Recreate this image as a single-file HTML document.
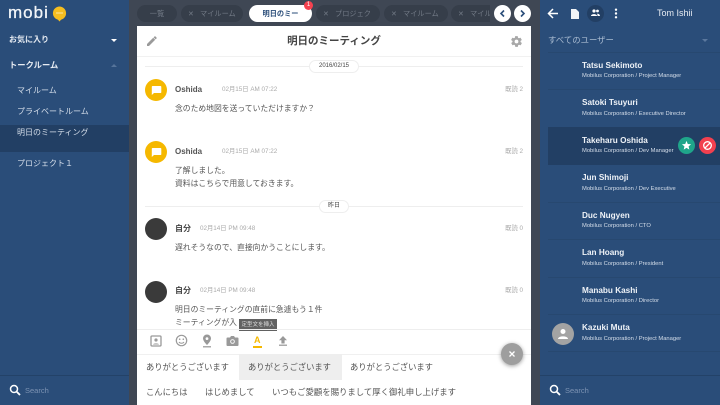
<!DOCTYPE html>
<html lang="ja"><head><meta charset="utf-8">
<style>
*{box-sizing:border-box;margin:0;padding:0}
html,body{width:720px;height:405px;overflow:hidden;background:#3f4754}
body{position:relative;font-family:"Liberation Sans","Noto Sans CJK JP",sans-serif;color:#444}
.a{position:absolute;white-space:nowrap;line-height:1}
.side{position:absolute;top:0;height:405px;background:#2a4d79}
.tab{position:absolute;top:5px;height:17px;border-radius:9px;background:#363e4a;color:#727a86;font-size:7.2px;line-height:17px;overflow:hidden;white-space:nowrap}
.tab i{font-style:normal;display:inline-block;width:12px}
.arrow{position:absolute;top:5px;width:17px;height:17px;border-radius:50%;background:#fff}
.av{position:absolute;left:145px;width:22px;height:22px;border-radius:50%;background:#f5b800}
.av.d{background:#3a3a3a}
.nm{position:absolute;left:175px;font-size:8px;font-weight:bold;color:#555;line-height:1;white-space:nowrap}
.tm{position:absolute;font-size:6.3px;color:#aaa;line-height:1;white-space:nowrap}
.rd{position:absolute;right:197px;font-size:6.3px;color:#aaa;line-height:1;white-space:nowrap}
.msg{position:absolute;left:175px;font-size:7.8px;color:#555;line-height:1;white-space:nowrap}
.un{position:absolute;left:582px;font-size:8.2px;color:#eef2f7;font-weight:bold;line-height:1;white-space:nowrap}
.us{position:absolute;left:582px;font-size:5.8px;color:#d5deea;line-height:1;white-space:nowrap}
.ln{position:absolute;left:548px;width:172px;height:1px;background:#274870}
.ph{position:absolute;font-size:8.3px;color:#555;line-height:1;white-space:nowrap}
.nav{position:absolute;left:17px;font-size:8px;color:#d5deea;line-height:1;white-space:nowrap}
svg{position:absolute;display:block}
</style></head><body>

<!-- left sidebar -->
<div class="side" style="left:0;width:129px"></div>
<div class="a" style="left:8px;top:4px;font-size:17px;color:#f2f5f8;letter-spacing:1px;-webkit-text-stroke:.3px #f2f5f8">mobi</div>
<svg style="left:52px;top:6px" width="15" height="16" viewBox="0 0 15 16"><path d="M7.5 0.500a6.700 6.700 0 0 1 1.500 13.200L7.500 15.500 6 13.700A6.700 6.700 0 0 1 7.500 .5z" fill="#f5bd1f"/><rect x="4" y="6.500" width="7" height="1" fill="#fff" opacity=".6"/></svg>
<div class="a" style="left:9px;top:36px;font-size:8px;font-weight:bold;color:#e6ebf2">お気に入り</div>
<svg style="left:110px;top:38px" width="8" height="5"><path d="M1 1h6L4 4z" fill="#fff"/></svg>
<div class="a" style="left:9px;top:61px;font-size:8.3px;font-weight:bold;color:#e6ebf2">トークルーム</div>
<svg style="left:110px;top:63px" width="8" height="5"><path d="M1 4h6L4 1z" fill="#56749a"/></svg>
<div class="nav" style="top:87px">マイルーム</div>
<div class="nav" style="top:108px">プライベートルーム</div>
<div class="a" style="left:0;top:125px;width:129px;height:27px;background:#223f64"></div>
<div class="nav" style="top:129px">明日のミーティング</div>
<div class="nav" style="top:160px">プロジェクト１</div>
<div class="a" style="left:0;top:375px;width:129px;height:1px;background:#234268"></div>
<svg style="left:9px;top:384px" width="12" height="12" viewBox="0 0 12 12"><circle cx="5" cy="5" r="3.500" fill="none" stroke="#fff" stroke-width="1.500"/><path d="M7.600 7.600L11 11" stroke="#fff" stroke-width="1.800"/></svg>
<div class="a" style="left:25px;top:387px;font-size:7.5px;color:#7d93b3">Search</div>

<!-- tabs -->
<div class="tab" style="left:137px;width:40px;text-align:center">一覧</div>
<div class="tab" style="left:181px;width:62px;padding-left:7px"><i>✕</i>マイルーム</div>
<div class="tab" style="left:249px;width:63px;background:#fff;color:#2a4d79;font-weight:bold;text-align:center">明日のミー</div>
<div class="a" style="left:304px;top:1px;width:9px;height:9px;border-radius:50%;background:#f4414f;color:#fff;font-size:6px;line-height:9px;text-align:center">1</div>
<div class="tab" style="left:316px;width:64px;padding-left:7px"><i>✕</i>プロジェク</div>
<div class="tab" style="left:384px;width:64px;padding-left:7px"><i>✕</i>マイルーム</div>
<div class="tab" style="left:451px;width:39px;border-radius:9px 0 0 9px;padding-left:7px"><i>✕</i>マイルーム</div>
<div class="arrow" style="left:494px"></div>
<svg style="left:494px;top:5px" width="17" height="17"><path d="M10 5.500L7 8.500l3 3" fill="none" stroke="#2a4d79" stroke-width="1.600"/></svg>
<div class="arrow" style="left:514px"></div>
<svg style="left:514px;top:5px" width="17" height="17"><path d="M7 5.500l3 3-3 3" fill="none" stroke="#2a4d79" stroke-width="1.600"/></svg>

<!-- main panel -->
<div class="a" style="left:137px;top:26px;width:394px;height:379px;background:#fff"></div>
<svg style="left:146px;top:35px" width="12" height="12" viewBox="0 0 12 12"><path d="M1 9v2h2l6.200-6.200-2-2zM10.600 3.400a.6.6 0 0 0 0-.8L9.400 1.400a.6.6 0 0 0-.8 0l-1 1 2 2z" fill="#9a9a9a"/></svg>
<div class="a" style="left:137px;top:36px;width:394px;text-align:center;font-size:10.500px;font-weight:bold;color:#444">明日のミーティング</div>
<svg style="left:510px;top:35px" width="13" height="13" viewBox="0 0 24 24"><path fill="#a8a8a8" d="M19.400 13c0-.3.1-.6.1-1s0-.7-.1-1l2.100-1.600c.2-.2.2-.4.1-.6l-2-3.500c-.1-.2-.4-.3-.6-.2l-2.500 1c-.5-.4-1.100-.7-1.700-1l-.4-2.600c0-.2-.2-.4-.5-.4h-4c-.2 0-.4.2-.5.4l-.4 2.600c-.6.3-1.100.6-1.700 1l-2.500-1c-.2-.1-.5 0-.6.2l-2 3.500c-.1.2-.1.5.1.6L4.600 11c0 .3-.1.6-.1 1s0 .7.1 1l-2.100 1.600c-.2.2-.2.4-.1.6l2 3.500c.1.2.4.3.6.2l2.500-1c.5.4 1.100.7 1.700 1l.4 2.600c0 .2.2.4.5.4h4c.2 0 .5-.2.5-.4l.4-2.600c.6-.3 1.100-.6 1.700-1l2.500 1c.2.1.5 0 .6-.2l2-3.500c.1-.2.1-.5-.1-.6zM12 15.500a3.500 3.500 0 1 1 0-7 3.500 3.500 0 0 1 0 7z"/></svg>
<div class="a" style="left:137px;top:56px;width:394px;height:1px;background:#f1f1f1"></div>

<!-- date 1 -->
<div class="a" style="left:145px;top:66px;width:378px;height:1px;background:#eee"></div>
<div class="a" style="left:309px;top:60px;width:50px;height:13px;border:1px solid #eee;border-radius:7px;background:#fff;font-size:6px;line-height:11px;text-align:center;color:#444">2016/02/15</div>

<!-- msg 1 -->
<div class="av" style="top:79px"></div>
<svg style="left:151px;top:85px" width="11" height="11" viewBox="0 0 11 11"><path d="M1.500 1h8a.8.8 0 0 1 .8.8v5.400a.8.8 0 0 1-.8.8H3L.8 10V1.800A.8.8 0 0 1 1.500 1z" fill="#fff"/></svg>
<div class="nm" style="top:86px">Oshida</div>
<div class="tm" style="left:222px;top:87px">02月15日 AM 07:22</div>
<div class="rd" style="top:87px">既読 2</div>
<div class="msg" style="top:105px">念のため地図を送っていただけますか？</div>

<!-- msg 2 -->
<div class="av" style="top:141px"></div>
<svg style="left:151px;top:147px" width="11" height="11" viewBox="0 0 11 11"><path d="M1.500 1h8a.8.8 0 0 1 .8.8v5.400a.8.8 0 0 1-.8.8H3L.8 10V1.800A.8.8 0 0 1 1.500 1z" fill="#fff"/></svg>
<div class="nm" style="top:148px">Oshida</div>
<div class="tm" style="left:222px;top:149px">02月15日 AM 07:22</div>
<div class="rd" style="top:149px">既読 2</div>
<div class="msg" style="top:167px">了解しました。</div>
<div class="msg" style="top:180px">資料はこちらで用意しておきます。</div>

<!-- date 2 -->
<div class="a" style="left:145px;top:206px;width:378px;height:1px;background:#eee"></div>
<div class="a" style="left:319px;top:200px;width:30px;height:13px;border:1px solid #eee;border-radius:7px;background:#fff;font-size:6px;line-height:11px;text-align:center;color:#444">昨日</div>

<!-- msg 3 -->
<div class="av d" style="top:218px"></div>
<div class="nm" style="top:225px;color:#444">自分</div>
<div class="tm" style="left:200px;top:226px">02月14日 PM 09:48</div>
<div class="rd" style="top:226px">既読 0</div>
<div class="msg" style="top:244px">遅れそうなので、直接向かうことにします。</div>

<!-- msg 4 -->
<div class="av d" style="top:281px"></div>
<div class="nm" style="top:287px;color:#444">自分</div>
<div class="tm" style="left:200px;top:288px">02月14日 PM 09:48</div>
<div class="rd" style="top:288px">既読 0</div>
<div class="msg" style="top:306px">明日のミーティングの直前に急遽もう１件</div>
<div class="msg" style="top:319px">ミーティングが入</div>

<!-- tooltip -->
<div class="a" style="left:239px;top:319px;width:38px;height:12px;background:#616161;color:#ddd;font-size:5.500px;line-height:12px;text-align:center">定型文を挿入</div>

<!-- toolbar -->
<div class="a" style="left:137px;top:329px;width:394px;height:1px;background:#eee"></div>
<svg style="left:150px;top:335px" width="12" height="12" viewBox="0 0 12 12"><rect x="1" y="1" width="10" height="10" rx="1" fill="none" stroke="#999" stroke-width="1.300"/><circle cx="6" cy="5" r="1.600" fill="#999"/><path d="M3 9.500c.5-1.500 5.500-1.500 6 0z" fill="#999"/></svg>
<svg style="left:175px;top:334px" width="13" height="13" viewBox="0 0 13 13"><circle cx="6.500" cy="6.500" r="5.200" fill="none" stroke="#999" stroke-width="1.200"/><circle cx="4.700" cy="5.200" r=".8" fill="#999"/><circle cx="8.300" cy="5.200" r=".8" fill="#999"/><path d="M4 8c1 1.600 4 1.600 5 0" fill="none" stroke="#999" stroke-width="1"/></svg>
<svg style="left:201px;top:334px" width="12" height="14" viewBox="0 0 12 14"><path d="M6 .5a4 4 0 0 0-4 4c0 2.700 4 6.500 4 6.500s4-3.800 4-6.500a4 4 0 0 0-4-4zm0 5.500a1.400 1.400 0 1 1 0-2.800 1.400 1.400 0 0 1 0 2.800z" fill="#999"/><rect x="2" y="12" width="8" height="1.500" fill="#aaa"/></svg>
<svg style="left:226px;top:335px" width="13" height="12" viewBox="0 0 13 12"><path d="M1.500 2.500h2.500L5 1h3l1 1.500h2.500a1 1 0 0 1 1 1V10a1 1 0 0 1-1 1h-10a1 1 0 0 1-1-1V3.500a1 1 0 0 1 1-1z" fill="#999"/><circle cx="6.500" cy="6.500" r="2.300" fill="#fff"/><circle cx="6.500" cy="6.500" r="1.400" fill="#999"/></svg>
<div class="a" style="left:254px;top:336px;font-size:9px;font-weight:bold;color:#f5b800">A</div>
<div class="a" style="left:253px;top:346px;width:9px;height:1.500px;background:#f5b800"></div>
<svg style="left:277px;top:335px" width="12" height="12" viewBox="0 0 12 12"><path d="M6 1l4 4.200H7.600V8.500H4.400V5.200H2z" fill="#999"/><rect x="2" y="9.500" width="8" height="1.500" fill="#aaa"/></svg>
<div class="a" style="left:137px;top:354px;width:394px;height:1px;background:#f0f0f0"></div>

<!-- phrases -->
<div class="a" style="left:239px;top:354px;width:103px;height:26px;background:#eeeeee"></div>
<div class="ph" style="left:146px;top:363px">ありがとうございます</div>
<div class="ph" style="left:248px;top:363px">ありがとうございます</div>
<div class="ph" style="left:350px;top:363px">ありがとうございます</div>
<div class="ph" style="left:146px;top:388px">こんにちは</div>
<div class="ph" style="left:205px;top:388px">はじめまして</div>
<div class="ph" style="left:272px;top:388px;font-size:8.400px">いつもご愛顧を賜りまして厚く御礼申し上げます</div>

<!-- FAB -->
<div class="a" style="left:501px;top:343px;width:22px;height:22px;border-radius:50%;background:#9e9e9e;box-shadow:0 1px 4px rgba(0,0,0,.4)"></div>
<svg style="left:508px;top:350px" width="8" height="8"><path d="M1.500 1.500l5 5M6.500 1.500l-5 5" stroke="#fff" stroke-width="1.300"/></svg>

<!-- right sidebar -->
<div class="side" style="left:540px;width:180px"></div>
<svg style="left:547px;top:8px" width="12" height="11" viewBox="0 0 12 11"><path d="M11 5.500H2M6 1L1.500 5.500 6 10" fill="none" stroke="#fff" stroke-width="1.500"/></svg>
<svg style="left:571px;top:9px" width="8" height="10" viewBox="0 0 8 10"><path d="M0 0h5l3 3v7H0z" fill="#f0f3f7"/></svg>
<div class="a" style="left:587px;top:5px;width:17px;height:17px;border-radius:50%;background:#223f64"></div>
<svg style="left:591px;top:9px" width="9" height="8" viewBox="0 0 9 8"><circle cx="3" cy="2" r="1.600" fill="#fff"/><circle cx="6.500" cy="2" r="1.400" fill="#fff"/><path d="M0 7c0-2.500 6-2.500 6 0zM6.500 7h2.500c0-2-2-2.500-3.200-2.200C6.300 5.300 6.500 6 6.500 7z" fill="#fff"/></svg>
<svg style="left:614px;top:8px" width="4" height="11"><circle cx="2" cy="1.700" r="1.200" fill="#fff"/><circle cx="2" cy="5.500" r="1.200" fill="#fff"/><circle cx="2" cy="9.300" r="1.200" fill="#fff"/></svg>
<div class="a" style="left:657px;top:9px;font-size:9px;color:#e6ebf2">Tom Ishii</div>
<div class="a" style="left:548px;top:36px;font-size:8.400px;color:#a9bbd1">すべてのユーザー</div>
<svg style="left:701px;top:38px" width="8" height="5"><path d="M1 1h6L4 4z" fill="#5b789e"/></svg>

<div class="ln" style="top:52px"></div>
<div class="ln" style="top:89px"></div>
<div class="ln" style="top:202px"></div>
<div class="ln" style="top:239px"></div>
<div class="ln" style="top:277px"></div>
<div class="ln" style="top:314px"></div>
<div class="ln" style="top:351px"></div>

<div class="a" style="left:548px;top:127px;width:172px;height:38px;background:#223f64"></div>

<div class="un" style="top:62px">Tatsu Sekimoto</div><div class="us" style="top:74px">Mobilus Corporation / Project Manager</div>
<div class="un" style="top:99px">Satoki Tsuyuri</div><div class="us" style="top:112px">Mobilus Corporation / Executive Director</div>
<div class="un" style="top:137px">Takeharu Oshida</div><div class="us" style="top:149px">Mobilus Corporation / Dev Manager</div>
<div class="un" style="top:174px">Jun Shimoji</div><div class="us" style="top:187px">Mobilus Corporation / Dev Executive</div>
<div class="un" style="top:212px">Duc Nugyen</div><div class="us" style="top:224px">Mobilus Corporation / CTO</div>
<div class="un" style="top:249px">Lan Hoang</div><div class="us" style="top:262px">Mobilus Corporation / President</div>
<div class="un" style="top:287px">Manabu Kashi</div><div class="us" style="top:299px">Mobilus Corporation / Director</div>
<div class="un" style="top:324px">Kazuki Muta</div><div class="us" style="top:337px">Mobilus Corporation / Project Manager</div>

<div class="a" style="left:678px;top:137px;width:17px;height:17px;border-radius:50%;background:#1fa58a"></div>
<svg style="left:681px;top:140px" width="11" height="11" viewBox="0 0 24 24"><path fill="#fff" d="M12 17.300l6.200 3.700-1.600-7L22 9.200l-7.200-.6L12 2 9.200 8.600 2 9.200 7.500 14l-1.600 7z"/></svg>
<div class="a" style="left:699px;top:137px;width:17px;height:17px;border-radius:50%;background:#f2404f"></div>
<svg style="left:702px;top:140px" width="11" height="11" viewBox="0 0 11 11"><circle cx="5.500" cy="5.500" r="3.800" fill="none" stroke="#fff" stroke-width="1.300"/><path d="M2.800 8.200l5.400-5.400" stroke="#fff" stroke-width="1.300"/></svg>

<div class="a" style="left:552px;top:323px;width:22px;height:22px;border-radius:50%;background:#a3a3a3"></div>
<svg style="left:557px;top:328px" width="12" height="12" viewBox="0 0 12 12"><circle cx="6" cy="3.500" r="2.500" fill="#fff"/><path d="M1 11c0-3.500 10-3.500 10 0z" fill="#fff"/></svg>

<div class="a" style="left:540px;top:375px;width:180px;height:1px;background:#234268"></div>
<svg style="left:549px;top:384px" width="12" height="12" viewBox="0 0 12 12"><circle cx="5" cy="5" r="3.500" fill="none" stroke="#fff" stroke-width="1.500"/><path d="M7.600 7.600L11 11" stroke="#fff" stroke-width="1.800"/></svg>
<div class="a" style="left:565px;top:387px;font-size:7.500px;color:#7d93b3">Search</div>

</body></html>
